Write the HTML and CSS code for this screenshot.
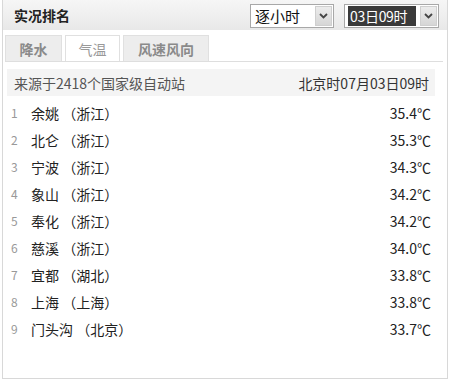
FILE: index.html
```html
<!DOCTYPE html>
<html lang="zh-CN">
<head>
<meta charset="utf-8">
<link rel="stylesheet" href="styles.css">
</head>
<body>
<div class="panel">
  <div class="header">
    <div class="title">实况排名</div>
    <div class="selects">
      <div class="sel sel-hour">
        <span class="sel-text">逐小时</span>
        <span class="sel-btn"><svg width="9" height="6" viewBox="0 0 9 6"><path d="M1 1 L4.5 4.5 L8 1" fill="none" stroke="#444" stroke-width="1.8"/></svg></span>
      </div>
      <div class="sel sel-time">
        <span class="sel-text hl">03日09时</span>
        <span class="sel-btn"><svg width="9" height="6" viewBox="0 0 9 6"><path d="M1 1 L4.5 4.5 L8 1" fill="none" stroke="#444" stroke-width="1.8"/></svg></span>
      </div>
    </div>
  </div>
  <div class="tabs">
    <div class="tab tab-rain">降水</div>
    <div class="tab tab-temp active">气温</div>
    <div class="tab tab-wind">风速风向</div>
  </div>
  <div class="info">
    <span>来源于2418个国家级自动站</span>
    <span>北京时07月03日09时</span>
  </div>
  <ul class="list">
    <li class="row"><span class="num">1</span><span class="name">余姚 （浙江）</span><span class="val">35.4℃</span></li>
    <li class="row"><span class="num">2</span><span class="name">北仑 （浙江）</span><span class="val">35.3℃</span></li>
    <li class="row"><span class="num">3</span><span class="name">宁波 （浙江）</span><span class="val">34.3℃</span></li>
    <li class="row"><span class="num">4</span><span class="name">象山 （浙江）</span><span class="val">34.2℃</span></li>
    <li class="row"><span class="num">5</span><span class="name">奉化 （浙江）</span><span class="val">34.2℃</span></li>
    <li class="row"><span class="num">6</span><span class="name">慈溪 （浙江）</span><span class="val">34.0℃</span></li>
    <li class="row"><span class="num">7</span><span class="name">宜都 （湖北）</span><span class="val">33.8℃</span></li>
    <li class="row"><span class="num">8</span><span class="name">上海 （上海）</span><span class="val">33.8℃</span></li>
    <li class="row"><span class="num">9</span><span class="name">门头沟 （北京）</span><span class="val">33.7℃</span></li>
  </ul>
</div>
</body>
</html>
```

FILE: styles.css
```css
* { box-sizing: border-box; }
html, body {
  margin: 0;
  padding: 0;
  background: #fff;
}
body {
  font-family: "Noto Sans CJK SC", "Noto Sans", sans-serif;
  font-size: 14px;
  color: #222;
}
.panel {
  margin-left: 2px;
  width: 446px;
  height: 379px;
  border: 1px solid #d8d8d8;
  border-top: none;
  overflow: hidden;
}
.header {
  height: 30px;
  background: linear-gradient(#f6f6f6, #e8e8e8);
  display: flex;
  align-items: center;
  justify-content: space-between;
  padding: 0 8px 0 11px;
}
.title {
  font-weight: bold;
  font-size: 14px;
  color: #222;
  line-height: 20px;
}
.selects {
  display: flex;
  gap: 10px;
  align-items: center;
  margin-top: 2px;
}
.sel {
  height: 24px;
  border: 1px solid #a8a8a8;
  background: #fff;
  display: flex;
  align-items: center;
  justify-content: space-between;
  padding: 0 1px 0 3px;
}
.sel-hour { width: 84px; }
.sel-time { width: 95px; }
.sel-text {
  font-size: 15px;
  line-height: 20px;
  color: #111;
  padding-left: 1px;
}
.sel-text.hl {
  background: #3a3a3a;
  color: #fff;
  width: 68px;
  font-size: 14px;
  padding-left: 2px;
  height: 20px;
  letter-spacing: -0.3px;
}
.sel-btn {
  width: 17px;
  height: 20px;
  background: linear-gradient(#ececec, #d6d6d6);
  border: 1px solid #cfcfcf;
  display: flex;
  align-items: center;
  justify-content: center;
}
.sel-btn svg { display: block; }
.tabs {
  display: flex;
  gap: 3px;
  margin: 5px 4px 0 2px;
  border-bottom: 1px solid #dedede;
}
.tab {
  height: 26px;
  line-height: 26px;
  text-align: center;
  color: #888;
  background: #ededed;
  border: 1px solid #e0e0e0;
  border-bottom: none;
  font-size: 14px;
}
.tab-rain { width: 57px; font-weight: bold; color: #8a8a8a; }
.tab-temp { width: 55px; }
.tab-wind { width: 86px; font-weight: bold; color: #8a8a8a; }
.tab.active {
  background: #fff;
  color: #999;
}
.info {
  margin: 7px 12px 0 4px;
  height: 27px;
  background: #f4f4f4;
  display: flex;
  align-items: center;
  justify-content: space-between;
  padding: 0 6px 0 7px;
  color: #555;
  font-size: 14px;
}
.info span:last-child { color: #333; }
.list {
  list-style: none;
  margin: 3px 0 0 0;
  padding: 0;
}
.row {
  height: 27px;
  display: flex;
  align-items: center;
  padding: 0 16px 0 8px;
}
.num {
  width: 20px;
  color: #999;
  font-size: 12px;
}
.name {
  flex: 1;
  color: #222;
}
.val {
  color: #222;
}
```
